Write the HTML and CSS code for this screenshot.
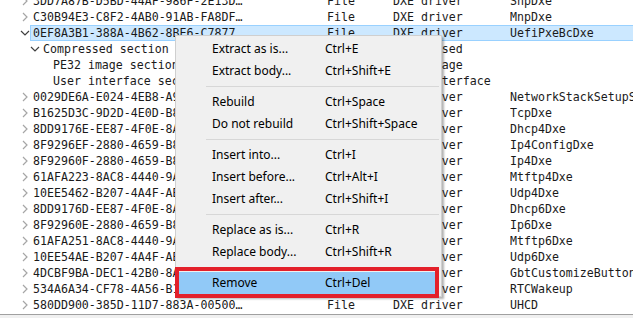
FILE: index.html
```html
<!DOCTYPE html>
<html lang="en">
<head>
    <meta charset="UTF-8">
    <meta name="viewport" content="width=device-width, initial-scale=1.0">
    <title>UEFITool - Remove</title>
    <link rel="stylesheet" href="styles.css">
</head>
<body>

<div class="tree">
    <div class="rows">
        <div class="row"><span class="name lvl0"><svg class="arrow" width="13" height="16"><polyline points="3,4 7,8 3,12"/></svg><span class="label">3DD7A87B-D5BD-44AF-986F-2E13DB5D4D3E</span></span><span></span><span>File</span><span>DXE driver</span><span class="text">SnpDxe</span></div>
        <div class="row"><span class="name lvl0"><svg class="arrow" width="13" height="16"><polyline points="3,4 7,8 3,12"/></svg><span class="label">C30B94E3-C8F2-4AB0-91AB-FA8DF4D5CC8F</span></span><span></span><span>File</span><span>DXE driver</span><span class="text">MnpDxe</span></div>
        <div class="row selected"><span class="name lvl0"><svg class="arrow open" width="13" height="16"><polyline points="1,6 5,10 9,6"/></svg><span class="label">0EF8A3B1-388A-4B62-8BE6-C7877D50AEDF</span></span><span></span><span>File</span><span>DXE driver</span><span class="text">UefiPxeBcDxe</span></div>
        <div class="row"><span class="name lvl1"><svg class="arrow open" width="13" height="16"><polyline points="1,6 5,10 9,6"/></svg><span class="label">Compressed section</span></span><span></span><span>Section</span><span>Compressed</span><span class="text"></span></div>
        <div class="row"><span class="name lvl2"><span class="noarrow"></span><span class="label">PE32 image section</span></span><span></span><span>Section</span><span>PE32 image</span><span class="text"></span></div>
        <div class="row"><span class="name lvl2"><span class="noarrow"></span><span class="label">User interface section</span></span><span></span><span>Section</span><span>User interface</span><span class="text"></span></div>
        <div class="row"><span class="name lvl0"><svg class="arrow" width="13" height="16"><polyline points="3,4 7,8 3,12"/></svg><span class="label">0029DE6A-E024-4EB8-A91D-9F23AA1F4E92</span></span><span></span><span>File</span><span>DXE driver</span><span class="text">NetworkStackSetupScreen</span></div>
        <div class="row"><span class="name lvl0"><svg class="arrow" width="13" height="16"><polyline points="3,4 7,8 3,12"/></svg><span class="label">B1625D3C-9D2D-4E0D-B864-8A763EE4EC50</span></span><span></span><span>File</span><span>DXE driver</span><span class="text">TcpDxe</span></div>
        <div class="row"><span class="name lvl0"><svg class="arrow" width="13" height="16"><polyline points="3,4 7,8 3,12"/></svg><span class="label">8DD9176E-EE87-4F0E-8A84-3F998311F930</span></span><span></span><span>File</span><span>DXE driver</span><span class="text">Dhcp4Dxe</span></div>
        <div class="row"><span class="name lvl0"><svg class="arrow" width="13" height="16"><polyline points="3,4 7,8 3,12"/></svg><span class="label">8F9296EF-2880-4659-B857-915A8901BDC8</span></span><span></span><span>File</span><span>DXE driver</span><span class="text">Ip4ConfigDxe</span></div>
        <div class="row"><span class="name lvl0"><svg class="arrow" width="13" height="16"><polyline points="3,4 7,8 3,12"/></svg><span class="label">8F92960F-2880-4659-B857-915A8901BDC8</span></span><span></span><span>File</span><span>DXE driver</span><span class="text">Ip4Dxe</span></div>
        <div class="row"><span class="name lvl0"><svg class="arrow" width="13" height="16"><polyline points="3,4 7,8 3,12"/></svg><span class="label">61AFA223-8AC8-4440-9AB5-762B1BF05156</span></span><span></span><span>File</span><span>DXE driver</span><span class="text">Mtftp4Dxe</span></div>
        <div class="row"><span class="name lvl0"><svg class="arrow" width="13" height="16"><polyline points="3,4 7,8 3,12"/></svg><span class="label">10EE5462-B207-4A4F-ABD8-CB522ECAA3A4</span></span><span></span><span>File</span><span>DXE driver</span><span class="text">Udp4Dxe</span></div>
        <div class="row"><span class="name lvl0"><svg class="arrow" width="13" height="16"><polyline points="3,4 7,8 3,12"/></svg><span class="label">8DD9176D-EE87-4F0E-8A84-3F998311F930</span></span><span></span><span>File</span><span>DXE driver</span><span class="text">Dhcp6Dxe</span></div>
        <div class="row"><span class="name lvl0"><svg class="arrow" width="13" height="16"><polyline points="3,4 7,8 3,12"/></svg><span class="label">8F92960E-2880-4659-B857-915A8901BDC8</span></span><span></span><span>File</span><span>DXE driver</span><span class="text">Ip6Dxe</span></div>
        <div class="row"><span class="name lvl0"><svg class="arrow" width="13" height="16"><polyline points="3,4 7,8 3,12"/></svg><span class="label">61AFA251-8AC8-4440-9AB5-762B1BF05156</span></span><span></span><span>File</span><span>DXE driver</span><span class="text">Mtftp6Dxe</span></div>
        <div class="row"><span class="name lvl0"><svg class="arrow" width="13" height="16"><polyline points="3,4 7,8 3,12"/></svg><span class="label">10EE54AE-B207-4A4F-ABD8-CB522ECAA3A4</span></span><span></span><span>File</span><span>DXE driver</span><span class="text">Udp6Dxe</span></div>
        <div class="row"><span class="name lvl0"><svg class="arrow" width="13" height="16"><polyline points="3,4 7,8 3,12"/></svg><span class="label">4DCBF9BA-DEC1-42B0-8A41-2B2E6D5C3B1F</span></span><span></span><span>File</span><span>DXE driver</span><span class="text">GbtCustomizeButton</span></div>
        <div class="row"><span class="name lvl0"><svg class="arrow" width="13" height="16"><polyline points="3,4 7,8 3,12"/></svg><span class="label">534A6A34-CF78-4A56-B1E4-0F9C2A5B7D60</span></span><span></span><span>File</span><span>DXE driver</span><span class="text">RTCWakeup</span></div>
        <div class="row"><span class="name lvl0"><svg class="arrow" width="13" height="16"><polyline points="3,4 7,8 3,12"/></svg><span class="label">580DD900-385D-11D7-883A-00500473D4EB</span></span><span></span><span>File</span><span>DXE driver</span><span class="text">UHCD</span></div>
    </div>
</div>
<div class="bottom-bar"></div>

<div class="menu">
    <div class="item"><span>Extract as is...</span><span>Ctrl+E</span></div>
    <div class="item"><span>Extract body...</span><span>Ctrl+Shift+E</span></div>
    <div class="sep"></div>
    <div class="item"><span>Rebuild</span><span>Ctrl+Space</span></div>
    <div class="item"><span>Do not rebuild</span><span>Ctrl+Shift+Space</span></div>
    <div class="sep"></div>
    <div class="item"><span>Insert into...</span><span>Ctrl+I</span></div>
    <div class="item"><span>Insert before...</span><span>Ctrl+Alt+I</span></div>
    <div class="item"><span>Insert after...</span><span>Ctrl+Shift+I</span></div>
    <div class="sep"></div>
    <div class="item"><span>Replace as is...</span><span>Ctrl+R</span></div>
    <div class="item"><span>Replace body...</span><span>Ctrl+Shift+R</span></div>
    <div class="sep"></div>
    <div class="item active"><span>Remove</span><span>Ctrl+Del</span></div>
</div>
<div class="mark"></div>

</body>
</html>
```

FILE: styles.css
```css
/* tree view with an open context menu */
body {
    margin: 0;
    width: 633px;
    height: 318px;
    overflow: hidden;
    background-color: #fff;
    position: relative;
}
.tree {
    height: 315px;
    overflow: hidden;
    font-family: "DejaVu Sans Mono", monospace;
    font-size: 11.6px;
    color: #1a1a1a;
}
.rows {
    margin-top: -7px;
}
.row {
    display: grid;
    grid-template-columns: 250px 77px 66px 117px 1fr;
    height: 16px;
    line-height: 16px;
    white-space: nowrap;
    position: relative;
    z-index: 0;
}
.row > span {
    overflow: hidden;
    position: relative;
    z-index: 1;
}
.row.selected::before {
    content: "";
    position: absolute;
    left: 30px;
    right: 0;
    top: 0;
    bottom: 0;
    background-color: #cce8ff;
    border: 1px solid #99d1ff;
    border-right: 0;
}
.name {
    display: flex;
    align-items: center;
    padding-right: 5px;
}
.lvl0 { padding-left: 20px; }
.lvl1 { padding-left: 30px; }
.lvl2 { padding-left: 40px; }
.arrow, .noarrow {
    flex: none;
    width: 13px;
    height: 16px;
}
.arrow polyline {
    fill: none;
    stroke: #a6a6a6;
    stroke-width: 1.2;
}
.arrow.open polyline {
    stroke: #404040;
}
.label {
    min-width: 0;
    overflow: hidden;
    text-overflow: ellipsis;
}
.bottom-bar {
    height: 3px;
    border-top: 1px solid #a0a0a0;
    background-color: #f0f0f0;
    margin-top: -1px;
}
.menu {
    position: absolute;
    z-index: 10;
    left: 175px;
    top: 35px;
    width: 261px;
    padding: 2px;
    border: 1px solid #cfcfcf;
    background-color: #f0f0f0;
    box-shadow: 2px 2px 2px rgba(0, 0, 0, 0.3);
    font-family: "Noto Sans", sans-serif;
    font-size: 12px;
    color: #000;
}
.item {
    display: grid;
    grid-template-columns: 113px auto;
    height: 22px;
    line-height: 22px;
    padding-left: 34px;
}
.item.active {
    background-color: #91c9f7;
}
.sep {
    height: 1px;
    margin: 4px 0 4px 28px;
    background-color: #d7d7d7;
}
.mark {
    position: absolute;
    z-index: 11;
    left: 175px;
    top: 267px;
    width: 256px;
    height: 23px;
    border: 4px solid #e3202a;
}
```
